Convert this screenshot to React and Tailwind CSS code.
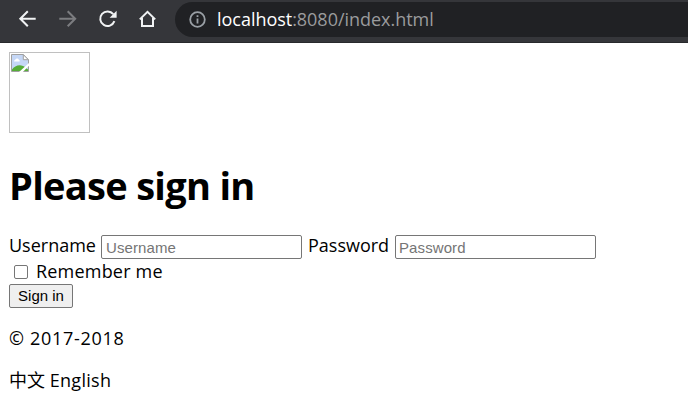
function BrowserBar() {
  return (
    <header className="flex h-[43px] items-start border-b border-[#28292c] bg-[#35363a] pl-4">
      <nav className="mt-[7px] flex gap-4 text-[#f1f3f4]">
        <svg className="size-6" viewBox="0 0 24 24" fill="none" stroke="currentColor" strokeWidth="2">
          <path d="M19.7 11.7H5M11.8 4.2 4.3 11.7l7.5 7.5" />
        </svg>
        <svg className="size-6 text-[#7c7d80]" viewBox="0 0 24 24" fill="none" stroke="currentColor" strokeWidth="2">
          <path d="M3.3 11.7H18.5M11.7 4.2l7.5 7.5-7.5 7.5" />
        </svg>
        <svg className="size-6" viewBox="0 0 24 24" fill="none" stroke="currentColor" strokeWidth="2">
          <path d="M18.4 14.2A7.3 7.3 0 1 1 17.3 7.2" />
          <path d="M20.6 3.8v7h-7z" fill="currentColor" stroke="none" />
        </svg>
        <svg className="size-6" viewBox="0 0 24 24" fill="none" stroke="currentColor" strokeWidth="2">
          <path d="M3.8 12.4 11.5 4.9l7.7 7.5M6 11v8h11v-8" />
        </svg>
      </nav>
      <div className="ml-[15px] mt-[2px] flex h-[35px] flex-1 items-center rounded-l-full bg-[#202124] pl-[14px]">
        <svg className="size-[17px] text-[#9aa0a6]" viewBox="0 0 17 17" fill="none" stroke="currentColor" strokeWidth="1.8">
          <circle cx="8.5" cy="8.5" r="7.3" />
          <path d="M8.5 7.5v5M8.5 4.3v1.8" />
        </svg>
        <span className="-mt-[2px] ml-[11px] whitespace-nowrap text-[18px] leading-6 tracking-[-0.03px] text-[#9a9b9d]">
          <span className="text-white">localhost</span>:8080/index.html
        </span>
      </div>
    </header>
  );
}

function BrokenImage() {
  return (
    <div className="size-[81px] border border-[#c0c0c0] p-px">
      <svg className="h-[18px] w-[18px]" viewBox="0 0 18 18">
        <path d="M.5.5h11.8l5.2 5.2v11.8H.5z" fill="#c5d7f6" stroke="#a0a0a0" />
        <path d="M3 7.5c0-2 2-1.7 2.2-2.8C7 3.8 8 5 7.8 6c1.3 0 1.3 1.5.5 1.5z" fill="#fff" />
        <path d="M1 17v-1.5c3-5 10-6 14-1.5l2 1.5V17z" fill="#56ad37" />
        <path d="M12.3.7v5h5z" fill="#fff" stroke="#a0a0a0" />
        <path d="M8 18 18 9v2.8L11.8 18z" fill="#fff" />
      </svg>
    </div>
  );
}

const inputStyle =
  'mt-[2px] h-6 w-[201px] rounded-[2px] border border-[#767676] bg-white font-["Liberation_Sans",Arial,sans-serif] text-[15px] leading-5 tracking-[0.1px] placeholder:text-[#757575] placeholder:opacity-100';

export default function App() {
  return (
    <div className={'h-[420px] w-[688px] overflow-hidden bg-white text-black font-["Open_Sans","Noto_Sans_CJK_SC",sans-serif]'}>
      <BrowserBar />
      <main className="flex flex-col items-start pl-[9px] pt-[9px]">
        <BrokenImage />
        <h1 className="mt-[26px] whitespace-nowrap text-[38px] font-bold leading-[53px] tracking-[-0.7px]">Please sign in</h1>
        <form className="mt-[21px]" onSubmit={(event) => event.preventDefault()}>
          <div className="flex h-[26px] items-start whitespace-nowrap text-[18px] leading-6">
            <label htmlFor="username" className="w-[92px]">Username</label>
            <input id="username" className={inputStyle + ' px-[4px]'} placeholder="Username" />
            <label htmlFor="password" className="ml-[6px] w-[87px]">Password</label>
            <input id="password" type="password" className={inputStyle + ' px-[3px]'} placeholder="Password" />
          </div>
          <label className="flex h-[25px] items-center whitespace-nowrap text-[18px] leading-[25px] tracking-[0.2px]">
            <input type="checkbox" className="ml-[5px] mr-[8px] size-[14px] appearance-none rounded-[2px] border border-[#767676] bg-white" />
            Remember me
          </label>
          <button className='block h-6 w-16 whitespace-nowrap rounded-[2px] border border-[#767676] bg-[#efefef] font-["Liberation_Sans",Arial,sans-serif] text-[15px] leading-[22px]'>Sign in</button>
        </form>
        <p className="mt-[18px] text-[18px] leading-[25px] tracking-[0.7px]">© 2017-2018</p>
        <p className="mt-[17px] text-[18px] leading-[25px]">
          <a>中文</a> <a className="tracking-[0.3px]">English</a>
        </p>
      </main>
    </div>
  );
}
